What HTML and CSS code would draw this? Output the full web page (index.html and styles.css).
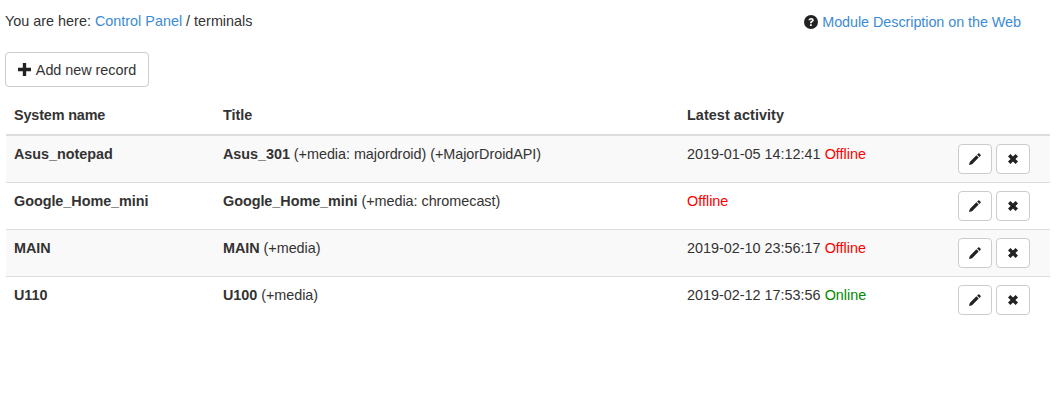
FILE: index.html
```html
<!DOCTYPE html>
<html lang="en">
<head>
<meta charset="utf-8">
<title>terminals</title>
<link rel="stylesheet" href="styles.css">
</head>
<body>
<div class="top">
  <div class="crumbs">You are here: <a href="#">Control Panel</a> / terminals</div>
  <a class="help" href="#"><svg class="ico-help" viewBox="0 0 24 24"><circle cx="12" cy="12" r="12" fill="#222"/><path d="M7.600 9.200C7.800 6.600 9.600 5 12.300 5c2.600 0 4.400 1.500 4.400 3.700 0 1.600-.9 2.500-2.100 3.300-1.100.7-1.300 1.100-1.300 2h-3c0-1.800.5-2.700 1.900-3.600 1-.6 1.400-1 1.400-1.600 0-.7-.5-1.100-1.300-1.100-.9 0-1.400.5-1.600 1.500z M10.300 15.700h3v3h-3z" fill="#fff"/></svg> Module Description on the Web</a>
</div>
<a class="btn add" href="#"><svg class="ico" viewBox="0 0 14 14"><path d="M5.200 0h3.600v5.200H14v3.600H8.800V14H5.200V8.800H0V5.200h5.200z"/></svg> Add new record</a>
<table class="grid">
  <thead>
    <tr><th class="c1">System name</th><th class="c2">Title</th><th class="c3">Latest activity</th><th></th></tr>
  </thead>
  <tbody>
    <tr>
      <td class="name"><b>Asus_notepad</b></td>
      <td class="name"><b>Asus_301</b> (+media: majordroid) (+MajorDroidAPI)</td>
      <td>2019-01-05 14:12:41 <span class="off">Offline</span></td>
      <td class="acts"><a class="btn sm" href="#"><svg class="ico-sm" viewBox="0 0 12 12"><path d="M0 12l.8-3.100 6.600-6.600 2.300 2.300-6.600 6.600z M8.100 1.600L9.300.4c.3-.3.7-.3 1 0l1.300 1.300c.3.3.3.7 0 1L10.400 3.900z"/></svg></a><a class="btn sm" href="#"><svg class="ico-sm" viewBox="0 0 12 12"><path d="M3.400 1L6 3.600 8.600 1 11 3.400 8.400 6 11 8.600 8.600 11 6 8.400 3.400 11 1 8.600 3.600 6 1 3.400z"/></svg></a></td>
    </tr>
    <tr>
      <td class="name"><b>Google_Home_mini</b></td>
      <td class="name"><b>Google_Home_mini</b> (+media: chromecast)</td>
      <td><span class="off">Offline</span></td>
      <td class="acts"><a class="btn sm" href="#"><svg class="ico-sm" viewBox="0 0 12 12"><path d="M0 12l.8-3.100 6.600-6.600 2.300 2.300-6.600 6.600z M8.100 1.600L9.300.4c.3-.3.7-.3 1 0l1.300 1.300c.3.3.3.7 0 1L10.400 3.900z"/></svg></a><a class="btn sm" href="#"><svg class="ico-sm" viewBox="0 0 12 12"><path d="M3.400 1L6 3.600 8.600 1 11 3.400 8.400 6 11 8.600 8.600 11 6 8.400 3.400 11 1 8.600 3.600 6 1 3.400z"/></svg></a></td>
    </tr>
    <tr>
      <td class="name"><b>MAIN</b></td>
      <td class="name"><b>MAIN</b> (+media)</td>
      <td>2019-02-10 23:56:17 <span class="off">Offline</span></td>
      <td class="acts"><a class="btn sm" href="#"><svg class="ico-sm" viewBox="0 0 12 12"><path d="M0 12l.8-3.100 6.600-6.600 2.300 2.300-6.600 6.600z M8.100 1.600L9.300.4c.3-.3.7-.3 1 0l1.300 1.300c.3.3.3.7 0 1L10.400 3.900z"/></svg></a><a class="btn sm" href="#"><svg class="ico-sm" viewBox="0 0 12 12"><path d="M3.400 1L6 3.600 8.600 1 11 3.400 8.400 6 11 8.600 8.600 11 6 8.400 3.400 11 1 8.600 3.600 6 1 3.400z"/></svg></a></td>
    </tr>
    <tr>
      <td class="name"><b>U110</b></td>
      <td class="name"><b>U100</b> (+media)</td>
      <td>2019-02-12 17:53:56 <span class="on">Online</span></td>
      <td class="acts"><a class="btn sm" href="#"><svg class="ico-sm" viewBox="0 0 12 12"><path d="M0 12l.8-3.100 6.600-6.600 2.300 2.300-6.600 6.600z M8.100 1.600L9.300.4c.3-.3.7-.3 1 0l1.300 1.300c.3.3.3.7 0 1L10.400 3.900z"/></svg></a><a class="btn sm" href="#"><svg class="ico-sm" viewBox="0 0 12 12"><path d="M3.400 1L6 3.600 8.600 1 11 3.400 8.400 6 11 8.600 8.600 11 6 8.400 3.400 11 1 8.600 3.600 6 1 3.400z"/></svg></a></td>
    </tr>
  </tbody>
</table>
</body>
</html>
```
FILE: styles.css
```css
* { box-sizing: border-box; }
html, body { margin: 0; background: #fff; }
body {
  padding: 12px 8px 0 5px;
  font: 14.4px/20px "Liberation Sans", Arial, sans-serif;
  color: #333;
}
a { color: #3d8bd4; text-decoration: none; }
.top { display: flex; justify-content: space-between; height: 40px; padding-right: 29px; }
.crumbs { margin-top: -1px; }
.help { letter-spacing: -0.06px; }
.ico-help { width: 14px; height: 14px; vertical-align: -2px; }
.btn {
  display: inline-flex;
  align-items: center;
  justify-content: center;
  background: #fff;
  border: 1px solid #ccc;
  border-radius: 4px;
  color: #333;
}
.add { height: 35px; width: 144px; gap: 5px; letter-spacing: -0.03px; }
.ico { width: 13px; height: 13px; fill: #222; }
.grid { width: 1044px; margin: 0 0 0 1px; border-collapse: collapse; table-layout: fixed; }
.grid th { text-align: left; padding: 17px 8px 8px; height: 48px; border-bottom: 2px solid #ddd; line-height: 20px; }
.c1 { width: 209px; letter-spacing: -0.15px; }
.c2 { width: 464px; }
.c3 { width: 271px; letter-spacing: 0.07px; }
.grid td { padding: 8px; border-top: 1px solid #ddd; vertical-align: top; height: 47px; }
.grid tbody tr:first-child td { border-top: 0; }
.grid tbody tr:nth-child(odd) { background: #f9f9f9; }
.grid .name { letter-spacing: -0.04px; }
.acts { white-space: nowrap; }
.sm { width: 34px; height: 30px; margin-right: 4px; padding-bottom: 1px; }
.ico-sm { width: 12px; height: 12px; fill: #222; }
.off { color: #f00; }
.on { color: #080; }
```
